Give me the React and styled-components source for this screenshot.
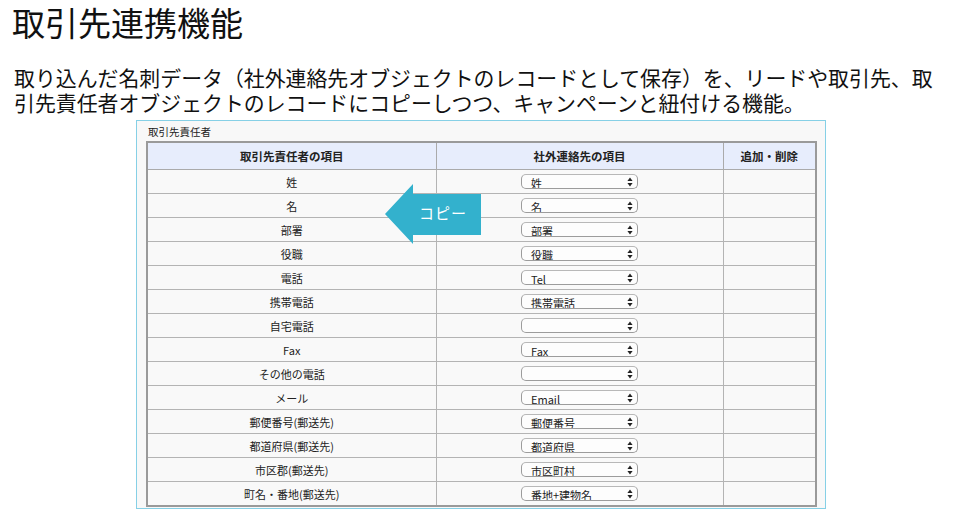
import React from "react";
import styled, { createGlobalStyle } from "styled-components";

const Global = createGlobalStyle`
  html, body { margin: 0; padding: 0; background: #ffffff; }
  body { font-family: "Noto Sans CJK JP", "Noto Sans", sans-serif; color: #111; }
`;

const Page = styled.div`
  width: 960px;
  height: 517px;
  overflow: hidden;
  display: flex;
  flex-direction: column;
`;

const Title = styled.h1`
  margin: 0 0 0 12px;
  font-size: 33px;
  line-height: 44px;
  font-weight: 400;
  color: #111;
`;

const Lead = styled.p`
  margin: 21px 0 0 14px;
  font-size: 20.9px;
  line-height: 25px;
  color: #111;
`;

const Shot = styled.div`
  margin: 5px 0 0 136px;
  width: 690px;
  height: 389px;
  border: 1.5px solid #86d0e6;
  background: #f8f8f8;
  overflow: hidden;
  display: flex;
  flex-direction: column;
  box-sizing: border-box;
  padding: 0 0 0 9px;
`;

const PanelLabel = styled.div`
  font-size: 10.5px;
  line-height: 14px;
  color: #222;
  padding: 4px 0 0 2px;
  height: 20px;
  box-sizing: border-box;
`;

const TableWrap = styled.div`
  position: relative;
  width: 669px;
`;

const Table = styled.table`
  width: 669px;
  border-collapse: collapse;
  table-layout: fixed;
  border: 2px solid #9a9a9a;
`;

const Th = styled.th`
  height: 26px;
  background: #e7edfc;
  border: 1px solid #aaaaaa;
  font-size: 11.5px;
  font-weight: 700;
  color: #222;
  text-align: center;
  padding: 0;
`;

const Td = styled.td`
  height: 23px;
  border: 1px solid #b4b4b4;
  font-size: 11px;
  color: #222;
  text-align: center;
  padding: 0;
  background: #f9f9f9;
`;

const Select = styled.div`
  margin: 0 auto;
  width: 117px;
  height: 15px;
  box-sizing: border-box;
  border: 1px solid #9c9c9c;
  border-top-color: #b8b8b8;
  border-radius: 5px;
  background: #fdfdfd;
  display: flex;
  align-items: flex-end;
  justify-content: space-between;
  padding: 0 4px 0 9px;
  overflow: hidden;
`;

const SelectText = styled.span`
  font-size: 11px;
  line-height: 12px;
  color: #222;
  transform: translateY(1px);
  white-space: nowrap;
`;

const Spinner = styled.svg`
  width: 6px;
  height: 10px;
  align-self: center;
  flex: none;
`;

const Arrow = styled.div`
  position: absolute;
  left: 239px;
  top: 43px;
  width: 96px;
  height: 60px;
`;

const ArrowShape = styled.svg`
  display: block;
  width: 96px;
  height: 60px;
`;

const ArrowText = styled.span`
  position: absolute;
  left: 34px;
  top: 19px;
  font-size: 15px;
  line-height: 20px;
  color: #ffffff;
  letter-spacing: 1px;
`;

const rows = [
  ["姓", "姓"],
  ["名", "名"],
  ["部署", "部署"],
  ["役職", "役職"],
  ["電話", "Tel"],
  ["携帯電話", "携帯電話"],
  ["自宅電話", ""],
  ["Fax", "Fax"],
  ["その他の電話", ""],
  ["メール", "Email"],
  ["郵便番号(郵送先)", "郵便番号"],
  ["都道府県(郵送先)", "都道府県"],
  ["市区郡(郵送先)", "市区町村"],
  ["町名・番地(郵送先)", "番地+建物名"],
];

export default function App() {
  return (
    <Page>
      <Global />
      <Title>取引先連携機能</Title>
      <Lead>
        取り込んだ名刺データ（社外連絡先オブジェクトのレコードとして保存）を、リードや取引先、取
        <br />
        引先責任者オブジェクトのレコードにコピーしつつ、キャンペーンと紐付ける機能。
      </Lead>
      <Shot>
        <PanelLabel>取引先責任者</PanelLabel>
        <TableWrap>
          <Table>
            <colgroup>
              <col style={{ width: 289 }} />
              <col style={{ width: 287 }} />
              <col style={{ width: 93 }} />
            </colgroup>
            <thead>
              <tr>
                <Th>取引先責任者の項目</Th>
                <Th>社外連絡先の項目</Th>
                <Th>追加・削除</Th>
              </tr>
            </thead>
            <tbody>
              {rows.map(([a, b], i) => (
                <tr key={i}>
                  <Td>{a}</Td>
                  <Td>
                    <Select>
                      <SelectText>{b}</SelectText>
                      <Spinner viewBox="0 0 6 10">
                        <path d="M3 0.5 L5.6 4 L0.4 4 Z M3 9.5 L5.6 6 L0.4 6 Z" fill="#222" />
                      </Spinner>
                    </Select>
                  </Td>
                  <Td />
                </tr>
              ))}
            </tbody>
          </Table>
          <Arrow>
            <ArrowShape viewBox="0 0 96 60">
              <polygon points="0,30 28,0 28,10 96,10 96,51 28,51 28,60" fill="#33b1cd" />
            </ArrowShape>
            <ArrowText>コピー</ArrowText>
          </Arrow>
        </TableWrap>
      </Shot>
    </Page>
  );
}
